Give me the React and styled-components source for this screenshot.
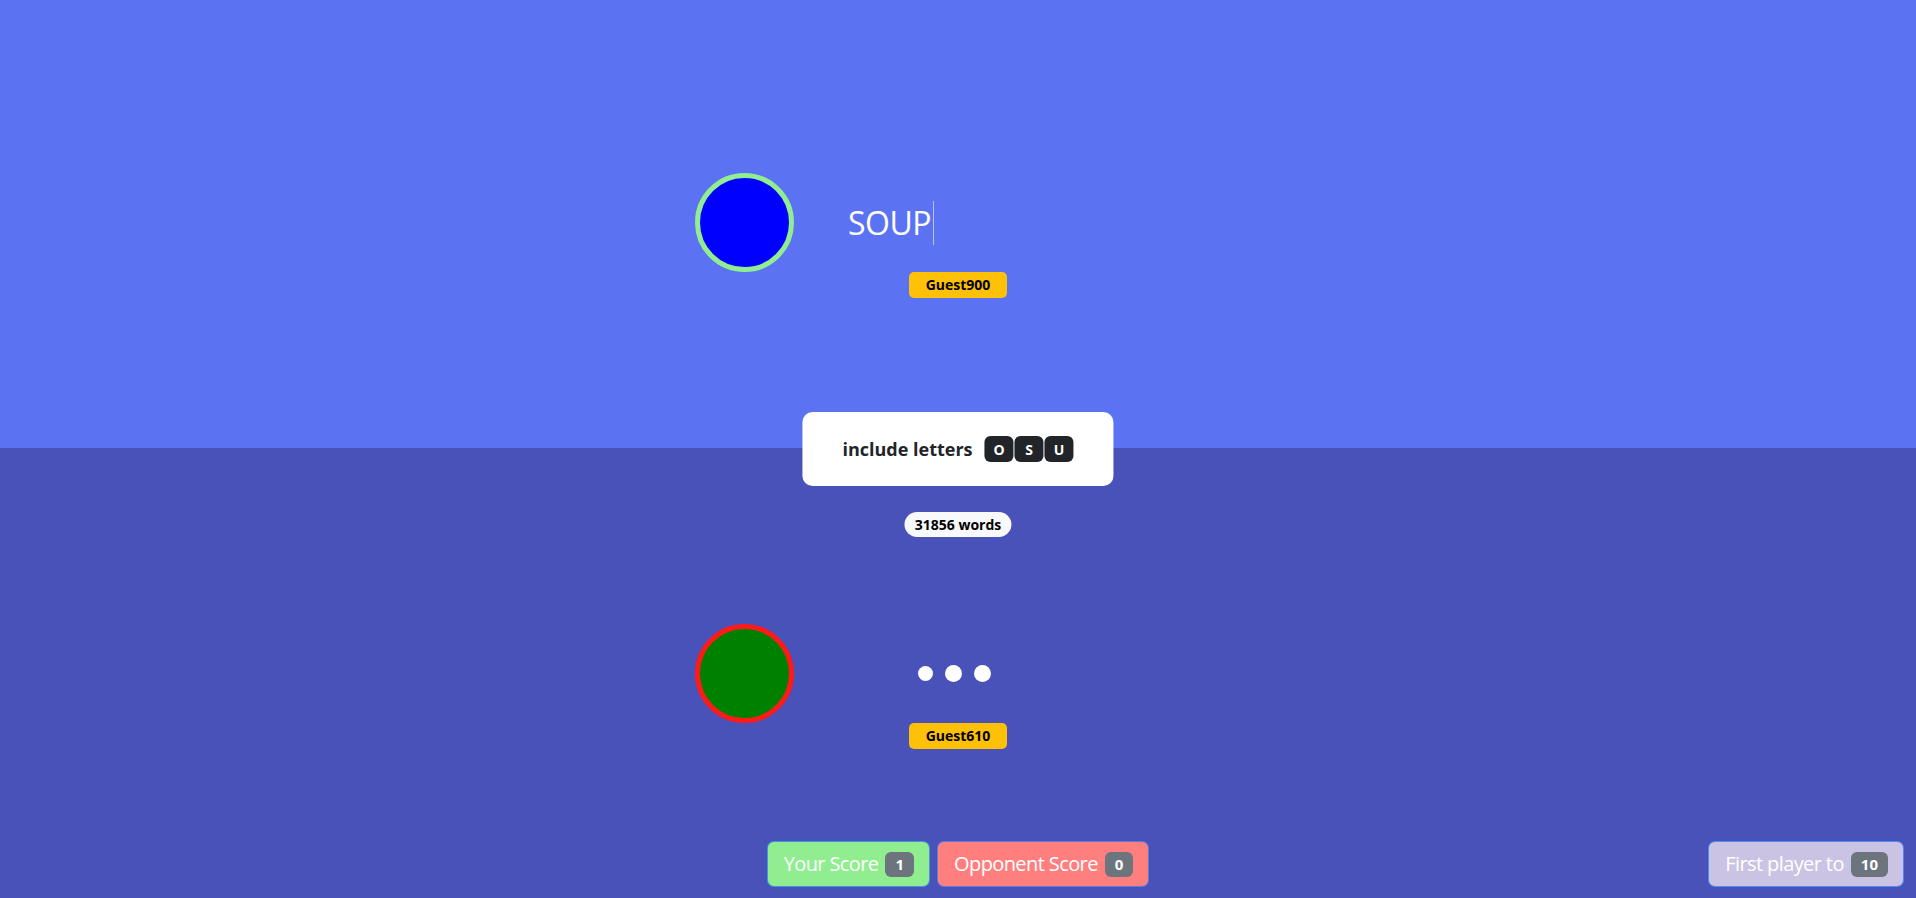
import React from "react";
import styled, { createGlobalStyle } from "styled-components";

const GlobalStyle = createGlobalStyle`
  html, body {
    margin: 0;
    padding: 0;
    height: 100%;
    overflow: hidden;
  }
  body {
    font-family: "Segoe UI", "Open Sans", "Noto Sans", sans-serif;
  }
  #root {
    height: 100%;
  }
`;

export default function App() {
  return (
    <>
      <GlobalStyle />
      <Page>
        <Half tone="top" offset={173}>
          <PlayerRow>
            <Avatar fill="#0000ff" ring="#90ee90" />
            <Field>
              <Typed>
                SOUP
                <Caret />
              </Typed>
            </Field>
          </PlayerRow>
          <NameBadge>Guest900</NameBadge>
        </Half>

        <Half tone="bottom" offset={176}>
          <PlayerRow>
            <Avatar fill="#008000" ring="#ff1a1a" />
            <Field>
              <Dots>
                <Dot size={15} />
                <Dot size={17} />
                <Dot size={17} />
              </Dots>
            </Field>
          </PlayerRow>
          <NameBadge>Guest610</NameBadge>

          <ScoreBar>
            <span />
            <ScoreGroup>
              <ScoreButton bg="#90ee90">
                Your Score <Count>1</Count>
              </ScoreButton>
              <ScoreButton bg="#ff7f7f">
                Opponent Score <Count>0</Count>
              </ScoreButton>
            </ScoreGroup>
            <GoalSlot>
              <ScoreButton bg="#cbc3e3">
                First player to <Count>10</Count>
              </ScoreButton>
            </GoalSlot>
          </ScoreBar>
        </Half>

        <Prompt>
          <PromptCard>
            <PromptText>include letters</PromptText>
            <Tiles>
              {["O", "S", "U"].map((l) => (
                <Tile key={l}>{l}</Tile>
              ))}
            </Tiles>
          </PromptCard>
          <WordCount>31856 words</WordCount>
        </Prompt>
      </Page>
    </>
  );
}

const Page = styled.div`
  position: relative;
  display: flex;
  flex-direction: column;
  height: 100vh;
  width: 100%;
`;

const Half = styled.section`
  flex: 1;
  display: flex;
  flex-direction: column;
  align-items: center;
  padding-top: ${(p) => p.offset}px;
  box-sizing: border-box;
  background: ${(p) => (p.tone === "top" ? "#5b73f2" : "#4852b9")};
`;

const PlayerRow = styled.div`
  width: 100%;
  display: grid;
  grid-template-columns: 1fr 244px 1fr;
  align-items: center;
`;

const Avatar = styled.div`
  justify-self: end;
  margin-right: 42px;
  width: 89px;
  height: 89px;
  border-radius: 50%;
  background: ${(p) => p.fill};
  border: 5px solid ${(p) => p.ring};
`;

const Field = styled.div`
  display: flex;
  align-items: center;
  height: 48px;
  padding: 0 12px;
`;

const Typed = styled.div`
  display: flex;
  align-items: center;
  color: #ffffff;
  font-size: 32px;
  line-height: 44px;
  letter-spacing: -0.5px;
`;

const Caret = styled.span`
  display: inline-block;
  width: 1px;
  height: 44px;
  margin-left: 2px;
  background: rgba(255, 255, 255, 0.55);
`;

const Dots = styled.div`
  flex: 1;
  display: flex;
  justify-content: center;
  align-items: center;
  gap: 12px;
  padding-right: 7px;
`;

const Dot = styled.span`
  width: ${(p) => p.size}px;
  height: ${(p) => p.size}px;
  border-radius: 50%;
  background: #ffffff;
`;

const NameBadge = styled.span`
  display: inline-block;
  padding: 4px 17px;
  line-height: 18px;
  font-size: 14px;
  font-weight: 700;
  color: #000000;
  background: #ffc107;
  border-radius: 5px;
`;

const Prompt = styled.div`
  position: absolute;
  top: 412px;
  left: 50%;
  transform: translateX(-50%);
  display: flex;
  flex-direction: column;
  align-items: center;
  gap: 26px;
`;

const PromptCard = styled.div`
  display: flex;
  align-items: center;
  gap: 12px;
  padding: 24px 40px;
  background: #ffffff;
  border-radius: 10px;
`;

const PromptText = styled.span`
  font-size: 18px;
  font-weight: 700;
  color: #212529;
  white-space: nowrap;
`;

const Tiles = styled.div`
  display: flex;
  gap: 1px;
`;

const Tile = styled.span`
  width: 29px;
  height: 26px;
  display: flex;
  align-items: center;
  justify-content: center;
  background: #212529;
  color: #ffffff;
  font-size: 14px;
  font-weight: 700;
  border-radius: 6px;
`;

const WordCount = styled.span`
  padding: 3px 10px;
  line-height: 19px;
  font-size: 14px;
  font-weight: 700;
  color: #000000;
  background: #f8f9fa;
  border-radius: 13px;
  white-space: nowrap;
`;

const ScoreBar = styled.div`
  margin-top: auto;
  width: 100%;
  display: grid;
  grid-template-columns: 1fr auto 1fr;
  align-items: center;
  padding: 0 12px 11px;
  box-sizing: border-box;
`;

const ScoreGroup = styled.div`
  display: flex;
  gap: 7px;
`;

const GoalSlot = styled.div`
  display: flex;
  justify-content: flex-end;
`;

const ScoreButton = styled.button`
  display: inline-flex;
  align-items: center;
  gap: 7px;
  padding: 7px 15px 7px 16px;
  font-family: inherit;
  font-size: 20px;
  line-height: 30px;
  letter-spacing: -0.6px;
  color: #ffffff;
  background: ${(p) => p.bg};
  border: 1px solid rgba(40, 120, 250, 0.75);
  border-radius: 7px;
  white-space: nowrap;
`;

const Count = styled.span`
  display: inline-block;
  padding: 5px 10px;
  font-size: 15px;
  line-height: 15px;
  font-weight: 700;
  letter-spacing: 0;
  background: #6c757d;
  color: #ffffff;
  border-radius: 6px;
`;
